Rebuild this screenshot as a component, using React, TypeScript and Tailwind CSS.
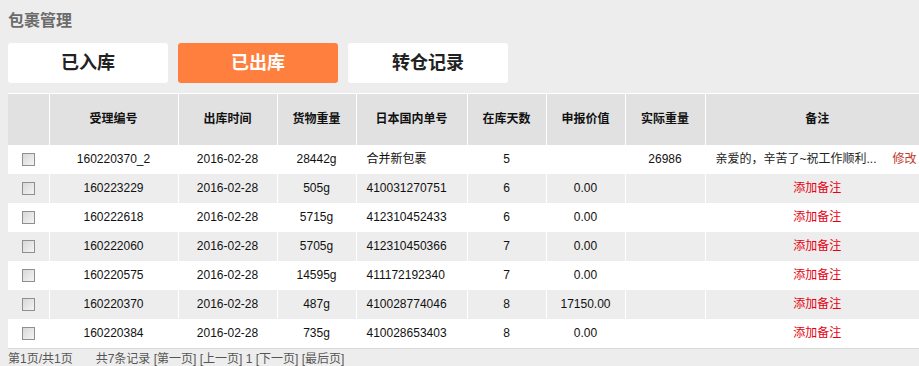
import React from "react";

const rows = [
  { id: "160220370_2", date: "2016-02-28", w: "28442g", no: "合并新包裹", days: "5", val: "", real: "26986", note: true },
  { id: "160223229", date: "2016-02-28", w: "505g", no: "410031270751", days: "6", val: "0.00", real: "", note: false },
  { id: "160222618", date: "2016-02-28", w: "5715g", no: "412310452433", days: "6", val: "0.00", real: "", note: false },
  { id: "160222060", date: "2016-02-28", w: "5705g", no: "412310450366", days: "7", val: "0.00", real: "", note: false },
  { id: "160220575", date: "2016-02-28", w: "14595g", no: "411172192340", days: "7", val: "0.00", real: "", note: false },
  { id: "160220370", date: "2016-02-28", w: "487g", no: "410028774046", days: "8", val: "17150.00", real: "", note: false },
  { id: "160220384", date: "2016-02-28", w: "735g", no: "410028653403", days: "8", val: "0.00", real: "", note: false },
];

const heads = ["受理编号", "出库时间", "货物重量", "日本国内单号", "在库天数", "申报价值", "实际重量", "备注"];
const widths = [41, 129, 99, 79, 111, 79, 79, 80, 224];

function Box() {
  return (
    <span className="inline-block w-[13px] h-[13px] border border-[#8f8f8f] bg-gradient-to-br from-[#d8d8d8] to-[#f4f4f4] align-middle" />
  );
}

export default function App() {
  const font = { fontFamily: '"Liberation Sans", Arial, "Noto Sans CJK SC", sans-serif' };
  return (
    <div className="w-[919px] h-[366px] overflow-hidden bg-[#ededed]" style={font}>
      <div className="pl-[8px] pt-[10px] h-[43px] text-[16px] font-bold text-[#6b6b6b] leading-[22px]">包裹管理</div>
      <div className="flex gap-[10px] pl-[8px]">
        {["已入库", "已出库", "转仓记录"].map((t, i) => (
          <div
            key={t}
            className={
              "w-[160px] h-[40px] rounded-[3px] flex items-center justify-center text-[18px] font-bold " +
              (i === 1 ? "bg-[#ff7f3e] text-white" : "bg-white text-[#222]")
            }
          >
            {t}
          </div>
        ))}
      </div>
      <div className="pl-[8px] mt-[10px]">
        <table className="table-fixed border-collapse w-[921px] text-[12px] text-[#111]">
          <colgroup>
            {widths.map((w, i) => (
              <col key={i} style={{ width: w }} />
            ))}
          </colgroup>
          <thead>
            <tr className="h-[51px] bg-[#e1e1e1] border-t border-white">
              <th className="border-r border-white"></th>
              {heads.map((h, i) => (
                <th key={h} className={"font-bold text-center " + (i < heads.length - 1 ? "border-r border-white" : "")}>
                  {h}
                </th>
              ))}
            </tr>
          </thead>
          <tbody>
            {rows.map((r, idx) => (
              <tr key={r.id} className={"h-[29px] " + (idx % 2 === 1 ? "bg-[#ededed]" : "bg-white")}>
                <td className="text-center border-r border-white"><Box /></td>
                <td className="text-center border-r border-white">{r.id}</td>
                <td className="text-center border-r border-white">{r.date}</td>
                <td className="text-center border-r border-white">{r.w}</td>
                <td className="text-left pl-[10px] border-r border-white">{r.no}</td>
                <td className="text-center border-r border-white">{r.days}</td>
                <td className="text-center border-r border-white">{r.val}</td>
                <td className="text-center border-r border-white">{r.real}</td>
                <td className="text-center">
                  {r.note ? (
                    <div className="flex pl-[10px] whitespace-nowrap">
                      <span className="text-[#222]">亲爱的，辛苦了~祝工作顺利...</span>
                      <span className="ml-[16px] text-[#c0392b]">修改</span>
                    </div>
                  ) : (
                    <span className="text-[#e60012]">添加备注</span>
                  )}
                </td>
              </tr>
            ))}
          </tbody>
        </table>
        <div className="h-[1px] w-[921px] bg-[#dadada]" />
        <div className="flex text-[12px] text-[#555] leading-[18px] pt-[1px]">
          <span>第1页/共1页</span>
          <span className="ml-[23px]">共7条记录 [第一页] [上一页] 1 [下一页] [最后页]</span>
        </div>
      </div>
    </div>
  );
}
